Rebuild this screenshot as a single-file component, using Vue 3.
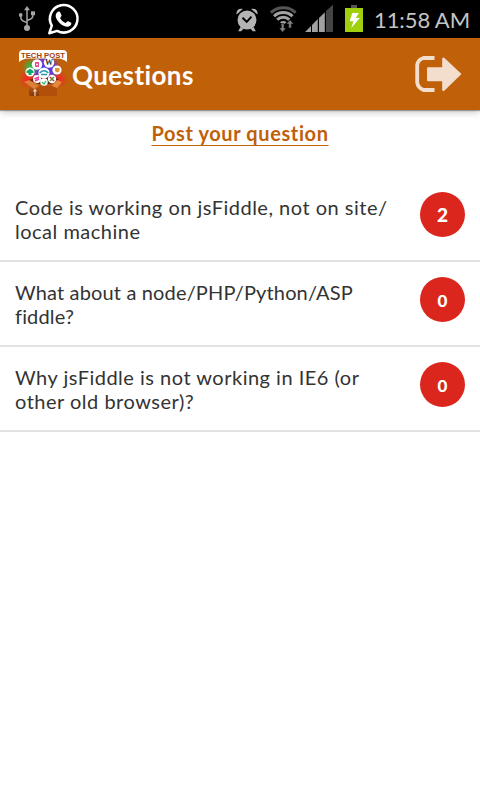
<template>
  <div class="screen">
    <!-- status bar -->
    <div class="status-bar">
      <svg class="status-icons" width="368" height="38" viewBox="0 0 368 38">
        <!-- usb -->
        <g fill="none" stroke="#a5a5a5" stroke-width="1.5">
          <path d="M27 9V28M27 22.5C22 21 20.7 20 20.7 16M27 20.5C32 19 33 18 33 14" />
        </g>
        <path d="M27 6L30 10.2H24Z" fill="#a5a5a5" />
        <circle cx="27" cy="28" r="3" fill="#a5a5a5" />
        <circle cx="20.7" cy="15" r="1.9" fill="#a5a5a5" />
        <rect x="31" y="11.3" width="4" height="3.9" fill="#a5a5a5" />
        <!-- whatsapp -->
        <path d="M49.3 33.2L51.8 25.7A13.8 13.8 0 1 1 57.2 30.9Z" fill="none" stroke="#fff" stroke-width="2.5" stroke-linejoin="round" />
        <path d="M57 12.5C58.3 11.2 59.7 11.2 60.4 12.7L61.5 15.3C61.8 16.3 60.3 17.4 60.1 18.1C61.2 20.4 63 22 65.4 23C66.3 22.7 67.2 20.9 68.2 21.2L71.2 22.8C71.8 24.5 70.1 26.6 67.7 26.8C62.2 26.8 56.3 20.8 55.7 16.2C55.6 14.5 56.2 13.2 57 12.5Z" fill="#fff" />
        <!-- alarm -->
        <g fill="#b4b4b4">
          <circle cx="247" cy="20" r="9.5" />
          <path d="M236.6 14.5C235.8 10.5 238.7 7.8 242.8 8.9ZM257.4 14.5C258.2 10.5 255.3 7.8 251.2 8.9Z" />
          <path d="M240.5 27L238.2 31.3H241.2L243.6 28.5ZM253.5 27L255.8 31.3H252.8L250.4 28.5Z" />
        </g>
        <path d="M242.5 17.8L246.7 21.8L251.5 16.6" fill="none" stroke="#000" stroke-width="1.9" />
        <!-- wifi -->
        <g fill="none" stroke-width="3">
          <path d="M270.9 12.6A18 18 0 0 1 295.6 12.6" stroke="#555" />
          <path d="M274 16.2A13.2 13.2 0 0 1 292.5 16.2" stroke="#a3a3a3" />
          <path d="M277.2 19.6A8.8 8.8 0 0 1 289.3 19.6" stroke="#a3a3a3" />
        </g>
        <path d="M280 22.2Q283.2 19.6 286.5 22.2L283.2 25Z" fill="#a3a3a3" />
        <path d="M281.2 23.5H284V28H286.2L282.6 32.3L279 28H281.2ZM288.6 28V24H286.3L290 19.8L293.7 24H291.4V28Z" fill="#7d7d7d" stroke="#000" stroke-width=".5" />
        <!-- signal -->
        <path d="M305 32L311 26V32ZM312 25L317.8 19.1V32H312ZM319 18L324.8 12.2V32H319Z" fill="#a1a1a1" />
        <path d="M326 11L333 4.5V32H326Z" fill="#454545" />
        <!-- battery -->
        <rect x="351" y="5" width="6" height="4" fill="#555" />
        <rect x="345" y="8" width="18" height="24" fill="#9fcf0d" />
        <path d="M352.3 13H358.8L355.8 18.1H359.8L351.3 28L353.4 21.2H349.6Z" fill="#fff" />
      </svg>
      <span class="clock">11:58 AM</span>
    </div>

    <!-- header -->
    <div class="header">
      <svg class="logo" width="48" height="48" viewBox="0 0 48 48">
        <defs>
          <radialGradient id="glow">
            <stop offset="0" stop-color="#3f35ff" />
            <stop offset=".6" stop-color="#6a3cd0" stop-opacity=".9" />
            <stop offset="1" stop-color="#c06008" stop-opacity="0" />
          </radialGradient>
          <radialGradient id="red">
            <stop offset="0" stop-color="#f22828" />
            <stop offset="1" stop-color="#f22828" stop-opacity="0" />
          </radialGradient>
          <radialGradient id="green">
            <stop offset="0" stop-color="#18c850" />
            <stop offset="1" stop-color="#18c850" stop-opacity="0" />
          </radialGradient>
          <linearGradient id="box" x2="0" y2="1">
            <stop offset="0" stop-color="#d0691b" />
            <stop offset="1" stop-color="#873707" />
          </linearGradient>
        </defs>
        <circle cx="26" cy="20" r="18" fill="url(#glow)" />
        <circle cx="9" cy="29" r="10" fill="url(#red)" />
        <circle cx="40" cy="29" r="9" fill="url(#red)" />
        <circle cx="12" cy="17" r="9" fill="url(#green)" />
        <path d="M0 12V4Q0 0 4 0H44Q48 0 48 4V12Q44 8.5 39 8.5H9Q4 8.5 0 12Z" fill="#fff" />
        <text class="logo-text" x="2" y="7.6" textLength="44" lengthAdjust="spacingAndGlyphs">TECH POST</text>
        <path d="M10 30L19 27H34L40 29L32 34H20Z" fill="#68230b" />
        <g fill="#fff">
          <circle cx="18" cy="14.5" r="5.2" />
          <circle cx="30" cy="12.5" r="5.2" />
          <circle cx="11" cy="22" r="4.6" />
          <circle cx="25" cy="23" r="5.6" />
          <circle cx="38" cy="20" r="4.6" />
          <circle cx="18" cy="29" r="4" />
          <circle cx="33" cy="29" r="4.2" />
          <circle cx="25" cy="32" r="3.8" />
        </g>
        <rect x="16" y="12" width="4" height="5" rx="1" fill="#e63a87" />
        <circle cx="18" cy="14.5" r="1" fill="#fff" />
        <text class="logo-w" x="30" y="15.3">W</text>
        <path d="M7.5 23V21L11 18.7L14.5 21V23H12.5V25H9.5V23Z" fill="#11a866" />
        <path d="M20.7 23Q25 18.5 29.3 23M22 24.5H28" fill="none" stroke="#299cab" stroke-width="1.6" />
        <path d="M36 18H40.5V21.5L38 22.5L36 21Z" fill="#d99635" />
        <path d="M15.5 29L20 27M16 31L20 29" stroke="#e73997" stroke-width="1.5" />
        <path d="M31 27L35 31" stroke="#d72e2e" stroke-width="1.6" />
        <path d="M35 27L31 31" stroke="#3caa45" stroke-width="1.6" />
        <path d="M23 32L25 34L27 31" fill="none" stroke="#32b96c" stroke-width="1.3" />
        <path d="M10 32L20 36H38V44Q38 46 36 46H12Q10 46 10 44Z" fill="url(#box)" />
        <path d="M20 36H38V46H20Z" fill="#b14f0b" />
        <path d="M10 30L20 36L15 39L5 32Z" fill="#dc8138" />
        <path d="M38 30L33 36L38 38L43 32Z" fill="#e48a3f" />
        <path d="M16 46V40M14.5 41.5L16 39.5L17.5 41.5" fill="none" stroke="#f4d5bb" stroke-width="1.2" />
      </svg>
      <h1 class="title">Questions</h1>
      <svg class="logout" width="48" height="38" viewBox="0 0 48 38">
        <path d="M19.5 3H8.5Q3 4.5 2.2 10V27.5Q3 33 8.5 35H19.5" fill="none" stroke="#f3decd" stroke-width="3.8" />
        <path d="M13 12.2H27.2V3.5Q28 2 29.5 3L46.5 19L29.5 35.5Q28 37 27.2 35V26.3H13Q12 26.3 12 25V13.4Q12 12.2 13 12.2Z" fill="#f3decd" />
      </svg>
    </div>

    <div class="post">
      <a class="post-link">Post your question</a>
    </div>

    <!-- question list -->
    <ul class="list">
      <li v-for="item in questions" :key="item.lines[0]" class="row">
        <span class="question" :class="item.spacing">
          <span v-for="line in item.lines" :key="line" class="line">{{ line }}</span>
        </span>
        <span class="badge" :class="{ empty: !item.answers }">{{ item.answers }}</span>
      </li>
    </ul>
  </div>
</template>

<script setup>
const questions = [
  { lines: ['Code is working on jsFiddle, not on site/', 'local machine'], answers: 2, spacing: '' },
  { lines: ['What about a node/PHP/Python/ASP', 'fiddle?'], answers: 0, spacing: 'tight' },
  { lines: ['Why jsFiddle is not working in IE6 (or', 'other old browser)?'], answers: 0, spacing: '' }
];
</script>

<style>
body {
  margin: 0;
  background: #fff;
}
</style>

<style scoped>
.screen {
  width: 480px;
  height: 800px;
  overflow: hidden;
  background: #fff;
  font-family: Lato, "Open Sans", sans-serif;
  color: #333;
}

.status-bar {
  display: flex;
  height: 38px;
  background: #000;
}

.status-icons {
  flex: none;
}

.clock {
  padding-left: 6px;
  font-size: 22px;
  line-height: 40px;
  letter-spacing: -0.1px;
  white-space: nowrap;
  color: #c4c4c4;
}

.header {
  display: flex;
  align-items: center;
  height: 72px;
  padding: 0 17px 0 19px;
  box-sizing: border-box;
  background: #c06008;
  box-shadow: 0 1px 8px rgba(0, 0, 0, 0.3), 0 1px 1px rgba(0, 0, 0, 0.3);
}

.logo-text {
  font: bold 8px "Liberation Sans", sans-serif;
  fill: #a63c08;
}

.logo-w {
  font: bold 8px "Liberation Serif", serif;
  text-anchor: middle;
  fill: #333;
}

.title {
  flex: 1;
  margin: 2px 0 0 5px;
  font-size: 26px;
  font-weight: bold;
  line-height: 36px;
  letter-spacing: 0.4px;
  color: #fff;
}

.post {
  height: 67px;
  padding-top: 10px;
  box-sizing: border-box;
  text-align: center;
}

.post-link {
  font-size: 20px;
  font-weight: bold;
  line-height: 26px;
  letter-spacing: 0.6px;
  color: #c06008;
  text-decoration: underline;
  text-decoration-thickness: 1px;
  text-underline-offset: 4px;
  text-decoration-skip-ink: none;
}

.list {
  margin: 0;
  padding: 0;
  list-style: none;
}

.row {
  display: flex;
  justify-content: space-between;
  height: 85px;
  padding: 15px 15px 0;
  box-sizing: border-box;
  border-bottom: 2px solid #e2e2e2;
}

.question {
  padding-top: 3px;
  font-size: 20px;
  line-height: 24px;
  letter-spacing: 0.5px;
}

.question.tight {
  letter-spacing: 0.15px;
}

.line {
  display: block;
  white-space: nowrap;
}

.badge {
  width: 45px;
  height: 45px;
  border-radius: 50%;
  background: #db261d;
  font-size: 19px;
  font-weight: 900;
  line-height: 46px;
  text-align: center;
  color: #fff;
}

.badge.empty {
  font-size: 17px;
  line-height: 47px;
}
</style>
